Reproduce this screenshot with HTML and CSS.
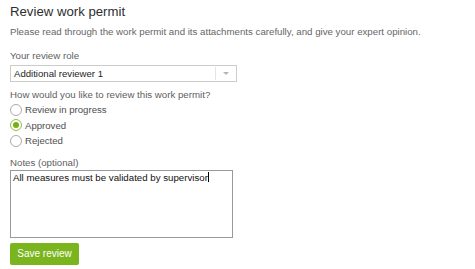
FILE: index.html
```html
<!DOCTYPE html>
<html lang="en">
<head>
    <meta charset="UTF-8">
    <title>Review work permit</title>
    <link rel="stylesheet" href="styles.css">
</head>
<body>
    <div class="review">
        <h1 class="title">Review work permit</h1>
        <p class="intro">Please read through the work permit and its attachments carefully, and give your expert opinion.</p>

        <label class="label label-role">Your review role</label>
        <div class="select">
            <span class="select-value">Additional reviewer 1</span>
            <span class="select-arrow">
                <svg width="6" height="3" viewBox="0 0 6 3"><path d="M0 0h6L3 3z" fill="#b5b5b5"/></svg>
            </span>
        </div>

        <label class="label label-radio">How would you like to review this work permit?</label>
        <div class="radios">
            <div class="radio"><span class="dot"></span>Review in progress</div>
            <div class="radio checked"><span class="dot"></span>Approved</div>
            <div class="radio"><span class="dot"></span>Rejected</div>
        </div>

        <label class="label label-notes">Notes (optional)</label>
        <div class="notes">All measures must be validated by supervisor<span class="caret"></span></div>

        <button class="save">Save review</button>
    </div>
</body>
</html>
```

FILE: styles.css
```css
body {
    margin: 0;
    background-color: #ffffff;
    font-family: "Liberation Sans", Arial, sans-serif;
    color: #555555;
}

.review {
    padding: 4px 10px 0 10px;
    display: flex;
    flex-direction: column;
    align-items: flex-start;
}

.title {
    font-size: 13.2px;
    font-weight: normal;
    color: #2e2e2e;
    margin: 0;
    line-height: 16px;
}

.intro {
    font-size: 9.7px;
    color: #666666;
    margin: 6px 0 0 0;
    line-height: 12px;
    white-space: nowrap;
}

.label {
    font-size: 9.7px;
    color: #5e5e5e;
    line-height: 12px;
}

.label-role {
    margin-top: 12px;
}

.select {
    margin-top: 3px;
    width: 227px;
    height: 17px;
    border: 1px solid #cccccc;
    box-sizing: border-box;
    display: flex;
    align-items: center;
}

.select-value {
    flex: 1;
    font-size: 9.6px;
    line-height: 12px;
    color: #1e1e1e;
    padding-left: 3px;
}

.select-arrow {
    width: 20px;
    height: 13px;
    border-left: 1px solid #e4e4e4;
    display: flex;
    align-items: center;
    justify-content: center;
}

.label-radio {
    margin-top: 7px;
}

.radios {
    display: flex;
    flex-direction: column;
    margin-top: 1px;
}

.radio {
    display: flex;
    align-items: center;
    font-size: 9.6px;
    color: #4e4e4e;
    height: 15.5px;
}

.dot {
    width: 12px;
    height: 12px;
    box-sizing: border-box;
    border: 1px solid #aaaaaa;
    border-radius: 50%;
    margin-right: 3px;
    display: flex;
    align-items: center;
    justify-content: center;
}

.checked .dot {
    border-color: #8fc24a;
}

.checked .dot::after {
    content: "";
    width: 6px;
    height: 6px;
    border-radius: 50%;
    background-color: #76b012;
}

.label-notes {
    margin-top: 8px;
}

.notes {
    margin-top: 1px;
    width: 223px;
    height: 68px;
    box-sizing: border-box;
    border: 1px solid #999999;
    padding: 1px 0 0 2px;
    font-size: 9.7px;
    color: #111111;
    line-height: 12px;
}

.caret {
    display: inline-block;
    width: 1px;
    height: 10px;
    background-color: #000000;
    vertical-align: -1px;
}

.save {
    margin-top: 5px;
    width: 69px;
    height: 22px;
    border: none;
    border-radius: 2px;
    background-color: #7ab51d;
    color: #ffffff;
    font-family: "Liberation Sans", Arial, sans-serif;
    font-size: 10px;
    padding: 0;
}
```
